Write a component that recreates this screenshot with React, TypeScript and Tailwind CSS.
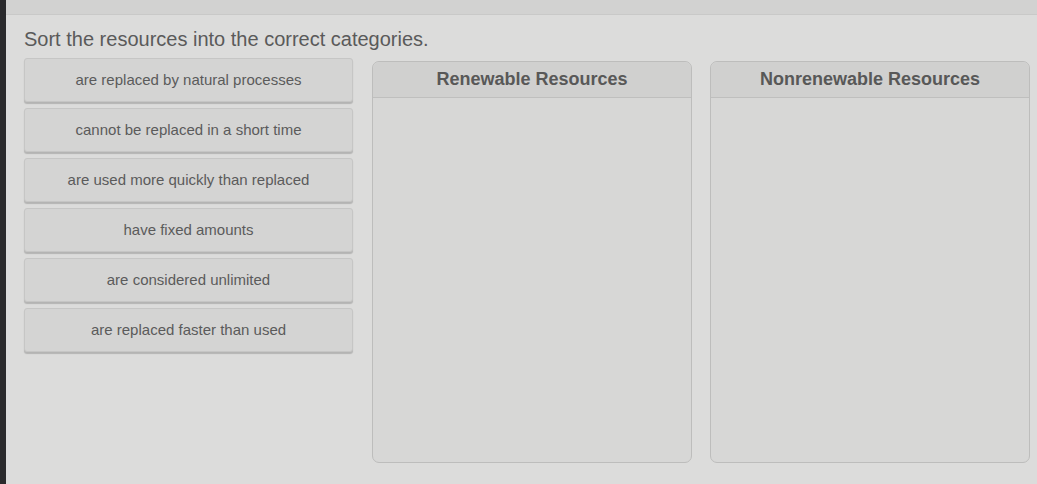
const items = [
  "are replaced by natural processes",
  "cannot be replaced in a short time",
  "are used more quickly than replaced",
  "have fixed amounts",
  "are considered unlimited",
  "are replaced faster than used",
];

const columns = ["Renewable Resources", "Nonrenewable Resources"];

export default function App() {
  return (
    <div
      className="flex h-[484px] w-[1037px] overflow-hidden bg-[#dcdcdb]"
      style={{ fontFamily: '"Liberation Sans", Arial, sans-serif' }}
    >
      <div className="w-[6px] shrink-0 bg-[#2a2a2c]" />
      <div className="flex flex-1 flex-col">
        <div className="h-[15px] bg-[#d2d2d1] border-b border-[#c9c9c8]" />
        <div className="flex flex-1 flex-col pl-[18px] pt-[12px]">
          <h1 className="text-[20px] leading-[24px] text-[#5a5a5a]">
            Sort the resources into the correct categories.
          </h1>
          <div className="mt-[7px] flex gap-[19px]">
            <div className="flex w-[329px] flex-col gap-[6px]">
              {items.map((text) => (
                <div
                  key={text}
                  className="flex h-[44px] items-center justify-center rounded-[3px] border border-[#c6c6c5] bg-[#d4d4d3] text-[15px] text-[#5b5b5b] shadow-[0_2px_1px_rgba(0,0,0,0.18)]"
                >
                  {text}
                </div>
              ))}
            </div>
            {columns.map((name) => (
              <div
                key={name}
                className="mt-[3px] mr-[-1px] flex h-[402px] w-[320px] flex-col rounded-[7px] border border-[#bdbdbc] bg-[#d7d7d6]"
              >
                <div className="flex h-[36px] items-center justify-center rounded-t-[7px] border-b border-[#bfbfbe] bg-[#d0d0cf] text-[18px] font-bold text-[#585858]">
                  {name}
                </div>
                <div className="flex-1" />
              </div>
            ))}
          </div>
        </div>
      </div>
    </div>
  );
}
